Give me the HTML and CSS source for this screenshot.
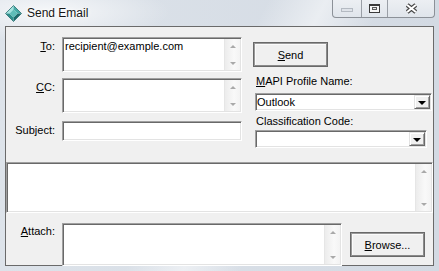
FILE: index.html
```html
<!DOCTYPE html>
<html>
<head>
<meta charset="utf-8">
<title>Send Email</title>
<link rel="stylesheet" href="styles.css">
</head>
<body>
<div class="window">
  <div class="titlebar">
    <svg class="app-icon" viewBox="0 0 17 17" width="17" height="17">
      <polygon points="0.5,8.5 8.5,0.5 8.5,4.5 4.5,8.5" fill="#a3e3df"/>
      <polygon points="8.5,0.5 16.5,8.5 12.5,8.5 8.5,4.5" fill="#45aaa6"/>
      <polygon points="16.5,8.5 8.5,16.5 8.5,12.5 12.5,8.5" fill="#1d6a6b"/>
      <polygon points="8.5,16.5 0.5,8.5 4.5,8.5 8.5,12.5" fill="#2f8f8c"/>
      <polygon points="8.5,4.5 12.5,8.5 8.5,12.5 4.5,8.5" fill="#5fbdb8"/>
      <polygon points="8.5,0.5 16.5,8.5 8.5,16.5 0.5,8.5" fill="none" stroke="#2a6f70" stroke-width="0.8"/>
    </svg>
    <span class="title">Send Email</span>
    <div class="caption">
      <div class="cbtn cbtn-min"><span class="min-glyph"></span></div>
      <div class="cbtn cbtn-max">
        <svg viewBox="0 0 11 9" width="11" height="9">
          <rect x="0.5" y="0.5" width="10" height="8" fill="#f6f6f6" stroke="#3a3a3a"/>
          <rect x="0.5" y="0.5" width="10" height="1.5" fill="#3a3a3a"/>
          <rect x="3.5" y="3.5" width="4" height="2" fill="#e8e8e8" stroke="#5a5a5a"/>
        </svg>
      </div>
      <div class="cbtn cbtn-close">
        <svg viewBox="0 0 13 11" width="13" height="11">
          <path d="M2.2 2 L10.8 9 M10.8 2 L2.2 9" stroke="#474747" stroke-width="4.2" fill="none"/>
          <path d="M2.2 2 L10.8 9 M10.8 2 L2.2 9" stroke="#ffffff" stroke-width="2" fill="none"/>
        </svg>
      </div>
    </div>
  </div>

  <div class="client">
    <div class="top">
      <div class="fields">
        <label class="lbl"><u>T</u>o:</label>
        <div class="textbox tb-to">
          <div class="tb-text">recipient@example.com</div>
          <div class="vscroll"><span class="arr-up"></span><span class="arr-down"></span></div>
        </div>
        <label class="lbl"><u>C</u>C:</label>
        <div class="textbox tb-cc">
          <div class="tb-text"></div>
          <div class="vscroll"><span class="arr-up"></span><span class="arr-down"></span></div>
        </div>
        <label class="lbl lbl-subject">Sub<u>j</u>ect:</label>
        <div class="textbox tb-subject"><div class="tb-text"></div></div>
      </div>

      <div class="side">
        <div class="button btn-send"><u>S</u>end</div>
        <div class="side-label lbl-mapi"><u>M</u>API Profile Name:</div>
        <div class="combo combo-mapi">
          <div class="combo-text">Outlook</div>
          <div class="combo-btn"><span class="tri"></span></div>
        </div>
        <div class="side-label lbl-class">Classification Code:</div>
        <div class="combo combo-class">
          <div class="combo-text"></div>
          <div class="combo-btn"><span class="tri"></span></div>
        </div>
      </div>
    </div>

    <div class="textbox tb-body">
      <div class="tb-text"></div>
      <div class="vscroll"><span class="arr-up"></span><span class="arr-down"></span></div>
    </div>

    <div class="attach-row">
      <label class="lbl lbl-attach"><u>A</u>ttach:</label>
      <div class="textbox tb-attach">
        <div class="tb-text"></div>
        <div class="vscroll"><span class="arr-up"></span><span class="arr-down"></span></div>
      </div>
      <div class="button btn-browse"><u>B</u>rowse...</div>
    </div>
  </div>
</div>
</body>
</html>
```

FILE: styles.css
```css
* { box-sizing: border-box; }
html, body { margin: 0; padding: 0; }
body {
  width: 439px;
  height: 271px;
  overflow: hidden;
  font-family: "Liberation Sans", Arial, sans-serif;
  font-size: 11px;
  line-height: 13px;
  color: #000;
  background: #d6dde6;
}
u { text-decoration: underline; text-underline-offset: 1px; }

.window {
  width: 439px;
  height: 271px;
  display: flex;
  flex-direction: column;
  background:
    linear-gradient(118deg, rgba(255,255,255,0) 46%, rgba(255,255,255,0.5) 56%, rgba(255,255,255,0) 66%),
    radial-gradient(ellipse 120px 30px at 50px 12px, rgba(255,255,255,0.75), rgba(255,255,255,0)),
    linear-gradient(to right, #dde3ea, #d3dae3);
}

/* Title bar */
.titlebar {
  height: 26px;
  display: flex;
  align-items: flex-start;
  flex: none;
}
.app-icon { margin: 5px 0 0 5px; flex: none; }
.title {
  margin: 6px 0 0 5px;
  font-size: 12px;
  line-height: 14px;
  color: #161616;
  text-shadow: 0 0 5px #fff, 0 0 2px #fff;
}
.caption {
  margin-left: auto;
  margin-right: 4px;
  height: 18px;
  display: flex;
  border: 1px solid #8c9198;
  border-top: none;
  border-radius: 0 0 4px 4px;
  background: linear-gradient(#eceff3, #e0e5eb);
  overflow: hidden;
}
.cbtn {
  display: flex;
  align-items: center;
  justify-content: center;
  height: 17px;
}
.cbtn-min { width: 28px; }
.cbtn-max { width: 26px; border-left: 1px solid #9a9fa6; }
.cbtn-close { width: 47px; border-left: 1px solid #9a9fa6; padding-left: 1px; }
.min-glyph {
  display: block;
  width: 12px;
  height: 4px;
  margin-top: 3px;
  background: #dfe3e9;
  border: 1px solid #b4bac2;
}

/* Client area */
.client {
  margin-left: 5px;
  width: 429px;
  height: 240px;
  border: 1px solid #6a6a6a;
  background: #f0f0f0;
  padding-top: 10px;
  flex: none;
}
.top { display: flex; align-items: flex-start; }

.fields {
  display: grid;
  grid-template-columns: 49px 180px;
  grid-template-rows: 35px 35px 22px;
  column-gap: 7px;
  row-gap: 6px;
}
.lbl {
  text-align: right;
  padding-top: 3px;
  white-space: nowrap;
}
.lbl-subject { padding-top: 5px; }

/* Sunken text boxes */
.textbox {
  display: flex;
  background: #fff;
  border: 1px solid;
  border-color: #a0a0a0 #ffffff #ffffff #a0a0a0;
  box-shadow: inset 1px 1px 0 #696969, inset -1px -1px 0 #e3e3e3;
  padding: 1px;
}
.tb-text {
  flex: 1;
  padding: 1px 0 0 1px;
  white-space: nowrap;
  overflow: hidden;
}
.tb-subject { height: 20px; align-self: end; }

.vscroll {
  width: 16px;
  flex: none;
  display: flex;
  flex-direction: column;
  justify-content: space-between;
  align-items: center;
  background: linear-gradient(to right, #ececec, #f9f9f9 60%, #f3f3f3);
  border-left: 1px solid #e6e6e6;
  padding: 6px 0 5px;
}
.arr-up, .arr-down {
  display: block;
  width: 0;
  height: 0;
  border-left: 3px solid transparent;
  border-right: 3px solid transparent;
}
.arr-up { border-bottom: 3px solid #a9a9a9; }
.arr-down { border-top: 3px solid #a9a9a9; }

/* Right column */
.side {
  margin-left: 11px;
  display: flex;
  flex-direction: column;
  align-items: flex-start;
}
.button {
  width: 75px;
  height: 25px;
  display: flex;
  align-items: center;
  justify-content: center;
  background: #f0f0f0;
  border: 1px solid #696969;
  box-shadow: inset 1px 1px 0 #9a9a9a, inset -1px -1px 0 #8a8a8a, inset 2px 2px 0 #fbfbfb;
  padding-top: 1px;
}
.btn-send { margin-top: 5px; }
.side-label { margin-left: 3px; white-space: nowrap; }
.lbl-mapi { margin-top: 8px; }
.lbl-class { margin-top: 4px; }

.combo {
  margin-left: 2px;
  height: 18px;
  display: flex;
  background: #fff;
  border: 1px solid;
  border-color: #a0a0a0 #ffffff #ffffff #a0a0a0;
  box-shadow: inset 1px 1px 0 #696969, inset -1px -1px 0 #e3e3e3;
  padding: 1px;
}
.combo-mapi { margin-top: 5px; width: 177px; }
.combo-class { margin-top: 2px; width: 172px; }
.combo-text { flex: 1; padding: 1px 0 0 0; white-space: nowrap; }
.combo-btn {
  width: 16px;
  flex: none;
  display: flex;
  align-items: center;
  justify-content: center;
  background: #f0f0f0;
  border: 1px solid;
  border-color: #e3e3e3 #696969 #696969 #e3e3e3;
  box-shadow: inset 1px 1px 0 #fff, inset -1px -1px 0 #a0a0a0;
}
.tri {
  display: block;
  width: 0;
  height: 0;
  margin-top: 1px;
  border-left: 4px solid transparent;
  border-right: 4px solid transparent;
  border-top: 4px solid #000;
}

/* Body */
.tb-body {
  margin-top: 14px;
  width: 427px;
  height: 51px;
}

/* Attach */
.attach-row {
  margin-top: 10px;
  display: flex;
  align-items: flex-start;
}
.lbl-attach { width: 49px; padding-top: 2px; }
.tb-attach {
  margin-left: 7px;
  width: 280px;
  height: 43px;
}
.btn-browse { margin-left: 8px; margin-top: 9px; }
```
